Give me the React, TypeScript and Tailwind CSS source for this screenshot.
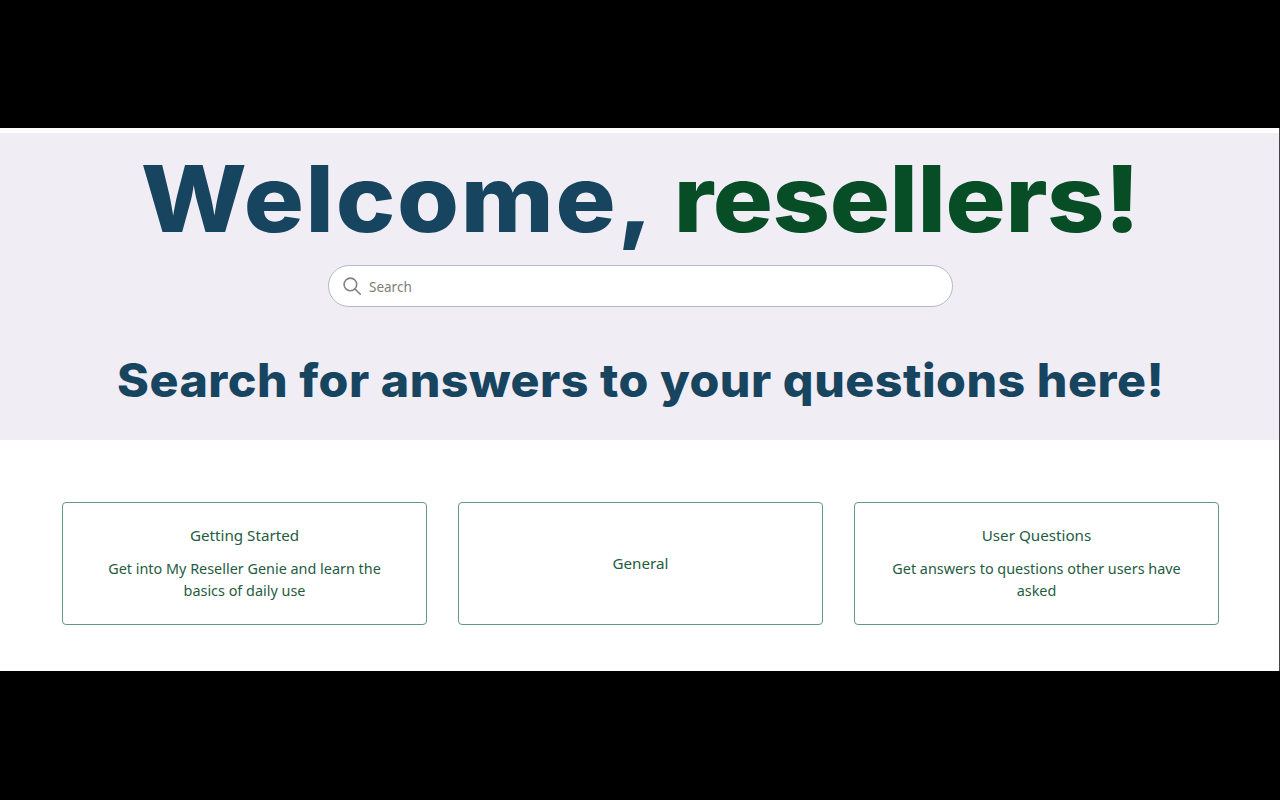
const cards = [
  {
    title: "Getting Started",
    text: "Get into My Reseller Genie and learn the basics of daily use",
  },
  { title: "General", text: "" },
  {
    title: "User Questions",
    text: "Get answers to questions other users have asked",
  },
];

const SearchIcon = () => (
  <svg width="18" height="18" viewBox="0 0 18 18" fill="none" stroke="#7b8579" strokeWidth="1.6" strokeLinecap="round">
    <circle cx="7.4" cy="7.4" r="6.3" />
    <path d="M12 12l5.3 5.3" />
  </svg>
);

const App = () => {
  return (
    <div className="h-[800px] w-[1280px] overflow-hidden bg-black flex flex-col font-['Noto_Sans',sans-serif]">
      <div className="h-[128px] shrink-0" />

      <div className="h-[543px] shrink-0 bg-white border-r border-[#444] pt-[5px]">
        {/* Hero */}
        <div className="h-[307px] bg-[#f0edf5] pl-[2px] flex flex-col items-center">
          <h1 className="mt-[16px] h-[100px] text-[92px] leading-[100px] font-extrabold font-['Inter',sans-serif] whitespace-nowrap scale-x-[1.09]">
            <span className="text-[#17445f] tracking-[1.55px]">Welcome, </span>
            <span className="text-[#074e27] tracking-[-0.35px]">resellers!</span>
          </h1>

          <div className="mt-[16px] h-[42px] w-[625px] rounded-[21px] border border-[#b4bac6] bg-white flex items-center pl-[14px] gap-[8px]">
            <SearchIcon />
            <span className="mt-[2px] text-[13.5px] text-[#7a8078]">Search</span>
          </div>

          <h2 className="mt-[46px] text-[46px] leading-[54px] font-extrabold tracking-[0.46px] font-['Inter',sans-serif] text-[#17445f] whitespace-nowrap scale-x-[1.05]">
            Search for answers to your questions here!
          </h2>
        </div>

        {/* Cards */}
        <div className="grid grid-cols-[repeat(3,365px)] gap-[31px] pl-[62px] pt-[62px]">
          {cards.map((card) => (
            <div
              key={card.title}
              className="h-[123px] rounded-[4px] border border-[#659781] flex flex-col items-center justify-center px-6 pb-[1px] text-center text-[#1f5c42]"
            >
              <div className="text-[15.2px] leading-[22px]">{card.title}</div>
              {card.text && (
                <p className="mt-[12px] text-[14.4px] leading-[22px]">{card.text}</p>
              )}
            </div>
          ))}
        </div>
      </div>
    </div>
  );
};

export default App;
